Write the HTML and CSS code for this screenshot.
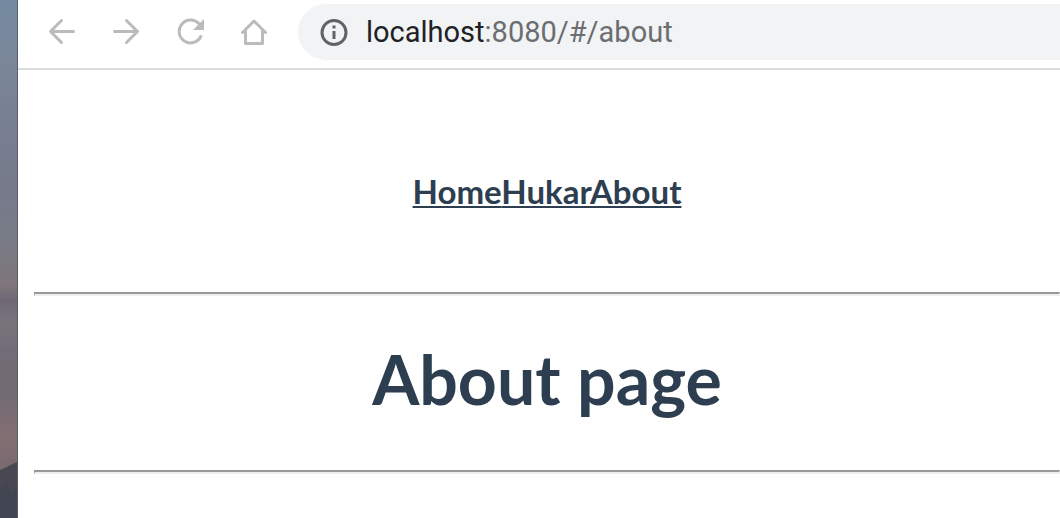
FILE: index.html
```html
<!DOCTYPE html>
<html lang="en">
<head>
<meta charset="utf-8">
<title>About</title>
<link rel="stylesheet" href="styles.css">
</head>
<body>
<div class="desktop">
  <svg class="ridge" viewBox="0 0 18 56" preserveAspectRatio="none" aria-hidden="true">
    <path d="M0 8L5 6L9 4L18 0V56H0Z" fill="#484752"/>
    <path d="M0 26L7 20L12 32L18 26V56H0Z" fill="#424552"/>
  </svg>
</div>
<div class="window">
  <header class="toolbar">
    <div class="buttons">
      <button class="tool" type="button" aria-label="Back">
        <svg viewBox="0 0 32 32"><path d="M27.500 15.500H5M15.500 4.500L4.500 15.500L15.500 26.500" stroke-linejoin="round"/></svg>
      </button>
      <button class="tool" type="button" aria-label="Forward">
        <svg viewBox="0 0 32 32"><path d="M4.500 15.500H27M16.500 4.500L27.500 15.500L16.500 26.500" stroke-linejoin="round"/></svg>
      </button>
      <button class="tool" type="button" aria-label="Reload">
        <svg viewBox="0 0 32 32"><path d="M26.800 20.500A11.400 11.400 0 1 1 25.200 8"/><path class="solid" d="M30 3V14H19Z"/></svg>
      </button>
      <button class="tool" type="button" aria-label="Home page">
        <svg viewBox="0 0 32 32"><path d="M4.500 16.500L16 5L27.500 16.500M7.500 15V27.500H24.500V15" stroke-linejoin="round"/></svg>
      </button>
    </div>
    <div class="address">
      <svg class="info" viewBox="0 0 28 28" aria-hidden="true"><circle cx="14" cy="14.500" r="12"/><path d="M14 13V21M14 7.500V10.500"/></svg>
      <div class="url"><span class="host">localhost</span>:8080/#/about</div>
    </div>
  </header>
  <main class="page">
    <nav class="nav"><a href="#/">Home</a><a href="#/hukar">Hukar</a><a href="#/about">About</a></nav>
    <hr class="rule">
    <h1 class="title">About page</h1>
    <hr class="rule">
  </main>
</div>
</body>
</html>
```
FILE: styles.css
```css
* { box-sizing: border-box; }

body {
  display: flex;
  min-height: 100vh;
  margin: 0;
  background: #fff;
  color: #2c3e50;
}

.desktop {
  display: flex;
  flex: 0 0 18px;
  align-items: flex-end;
  border-right: 1px solid #595d68;
  background: linear-gradient(#7489a0 0%, #7b8799 12%, #777f90 25%, #767a8b 37%, #777c87 45%, #7c777e 52%, #80757a 55%, #6e6874 58%, #77747c 62%, #726c76 68%, #736b73 76%, #836f73 84%, #796a70 90%);
}

.ridge {
  width: 100%;
  height: 56px;
}

.window {
  flex: 1;
  min-width: 0;
}

.toolbar {
  display: flex;
  gap: 16px;
  padding: 4px 0 8px 28px;
  border-bottom: 2px solid #dadce0;
}

.buttons {
  display: flex;
  align-items: center;
  gap: 32px;
  padding-right: 12px;
}

.tool {
  width: 32px;
  height: 32px;
  padding: 0;
  border: 0;
  background: none;
}

.tool svg {
  display: block;
  fill: none;
  stroke: #babbbc;
  stroke-width: 3;
  stroke-linecap: round;
}

.tool .solid {
  fill: #babbbc;
  stroke: none;
}

.address {
  display: flex;
  flex: 1;
  align-items: center;
  gap: 18px;
  height: 56px;
  padding-left: 22px;
  border-radius: 28px 0 0 28px;
  background: #f1f3f4;
}

.info {
  width: 28px;
  height: 28px;
  fill: none;
  stroke: #5f6368;
  stroke-width: 3;
}

.url {
  color: #6b6d70;
  font: 29px/36px Roboto, sans-serif;
}

.host { color: #202124; }

.page {
  padding-left: 16px;
  font-family: Lato, sans-serif;
  font-weight: 700;
  text-align: center;
}

.nav {
  padding: 102px 60px 82px;
  font-size: 33px;
  line-height: 38px;
}

.nav a {
  color: #2c3e50;
  text-decoration-thickness: 2px;
  text-underline-offset: 2px;
  text-decoration-skip-ink: none;
}

.rule {
  margin: 0;
  border: solid;
  border-width: 2px 1px;
  border-color: #999 #eee #eee #999;
}

.title {
  margin: 40px 0 48px;
  font-size: 68px;
  line-height: 86px;
}
```
